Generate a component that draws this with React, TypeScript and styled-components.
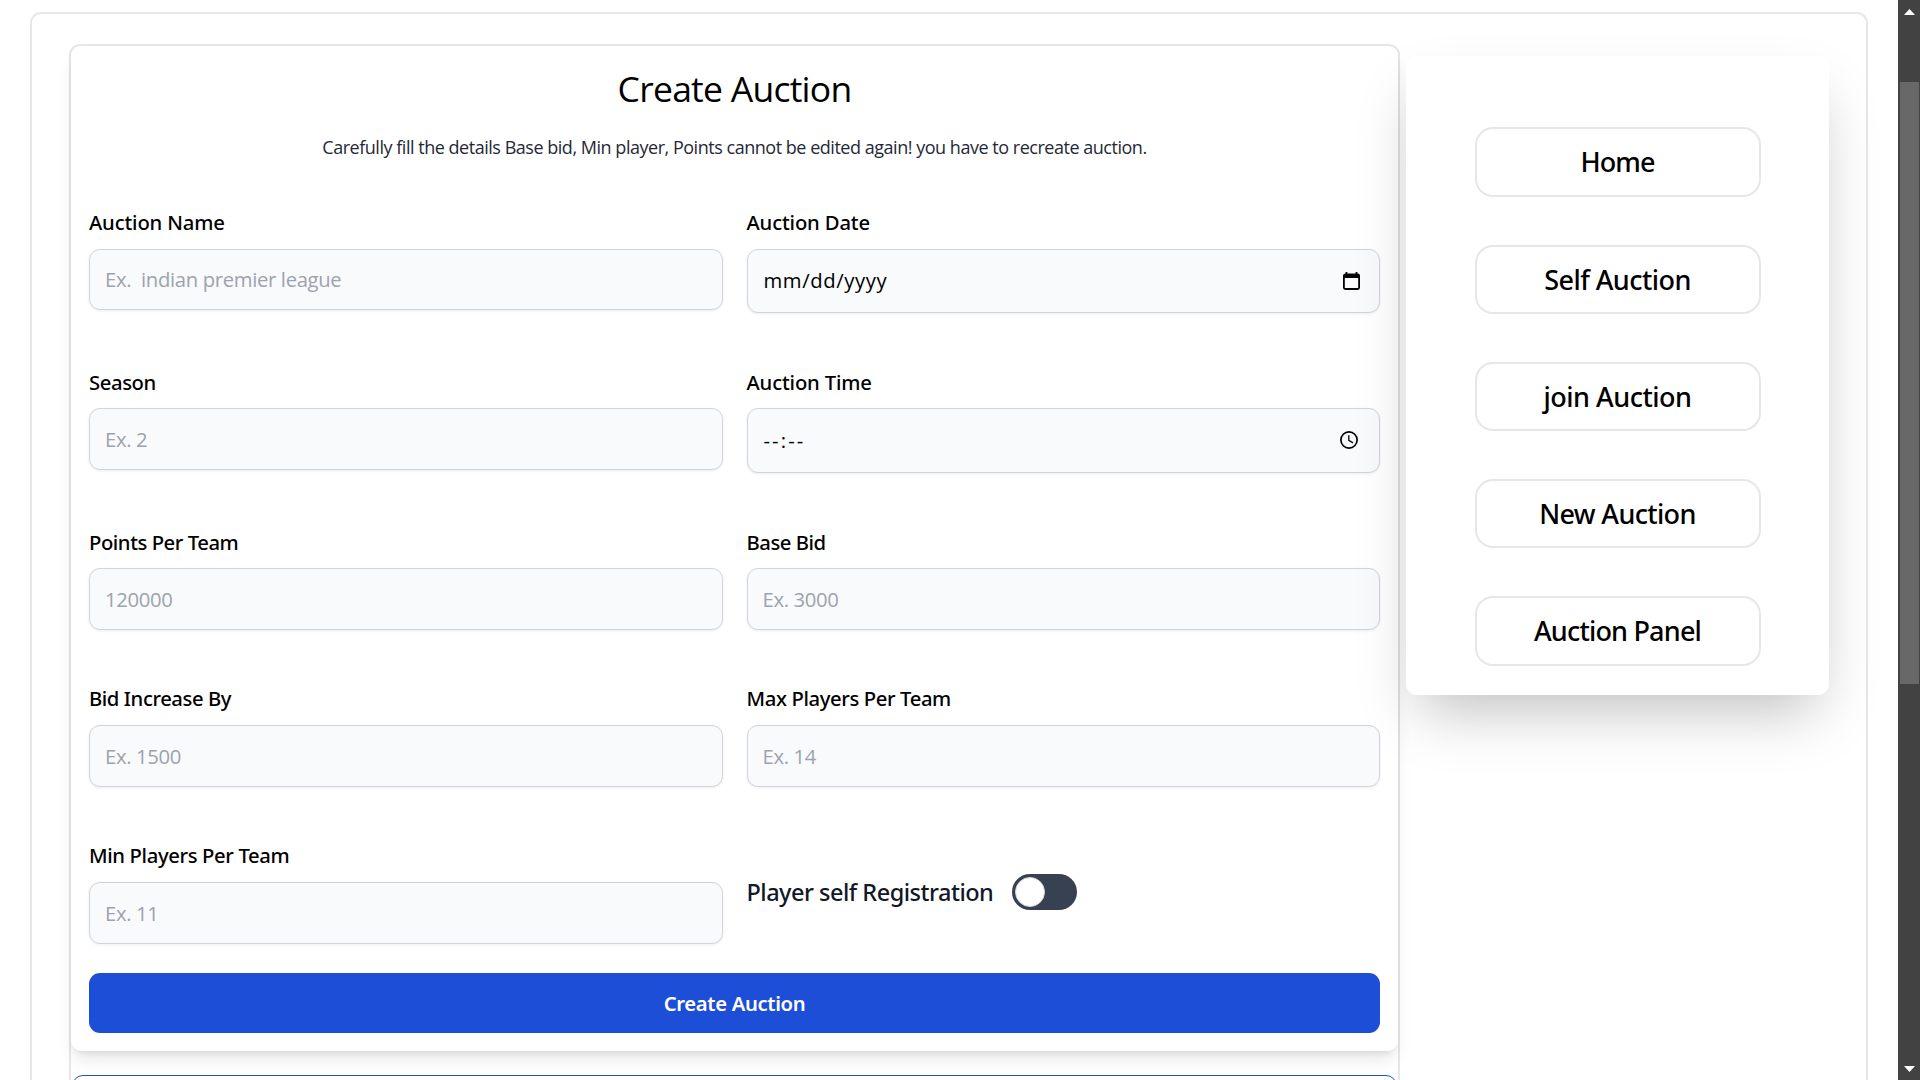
import React, { useState } from "react";
import styled, { createGlobalStyle } from "styled-components";

const textFont = '"Segoe UI", "Open Sans", "Noto Sans", sans-serif';
const mediumFont = '"Segoe UI", "Noto Sans", "Open Sans", sans-serif';

const GlobalStyle = createGlobalStyle`
  *, *::before, *::after { box-sizing: border-box; }
  body { margin: 0; background: #fff; color: #000; font-family: ${textFont}; overflow: hidden; }
  h1, p { margin: 0; font-weight: 400; }
  button, input { font: inherit; }
`;

const Screen = styled.div`
  display: flex;
  height: 1080px;
  overflow: hidden;
`;

const Page = styled.div`
  flex: 1;
  padding: 12px 30px 0;
  overflow: hidden;
`;

const Frame = styled.main`
  display: flex;
  align-items: flex-start;
  gap: 6px;
  height: 1400px;
  padding: 30px 37px;
  border: 2px solid #e5e7eb;
  border-radius: 11px;
`;

const Panel = styled.section`
  width: 1331px;
  height: 1300px;
  flex: none;
  border: 2px solid #e5e7eb;
  border-radius: 11px;
`;

const Form = styled.form`
  display: flex;
  flex-direction: column;
  height: 1005px;
  padding: 22px 18px 18px;
  border-radius: 11px;
  box-shadow: 0 11px 17px -3px rgba(0, 0, 0, 0.1), 0 4.5px 7px -4px rgba(0, 0, 0, 0.1);
`;

const Title = styled.h1`
  font-size: 35.5px;
  line-height: 40px;
  letter-spacing: -0.75px;
  text-align: center;
`;

const Notice = styled.p`
  margin-top: 25px;
  color: #1f2937;
  font-size: 18px;
  line-height: 29px;
  letter-spacing: -0.475px;
  text-align: center;
`;

const Fields = styled.div`
  display: grid;
  grid-template-columns: 1fr 1fr;
  grid-template-rows: 159px 160px 157px 157px 104px;
  column-gap: 24px;
  margin-top: 45px;
`;

const Field = styled.div`
  display: flex;
  flex-direction: column;
  gap: 12px;
`;

const Label = styled.label<{ $track: number; $drop: number }>`
  padding-top: ${(p) => p.$drop * 2}px;
  height: 30px;
  font-family: ${mediumFont};
  font-weight: 550;
  font-size: 20.25px;
  line-height: ${(p) => 30 - p.$drop * 2}px;
  letter-spacing: ${(p) => p.$track}px;
`;

const Input = styled.input<{ $height: number }>`
  width: 100%;
  height: ${(p) => p.$height}px;
  padding: 0 15px ${(p) => (p.$height === 61 ? 2 : 1)}px;
  border: 1px solid #d1d5db;
  border-radius: 11px;
  outline: none;
  background: #f9fafb;
  box-shadow: 0 1px 3px rgba(0, 0, 0, 0.07);
  font-size: 20.25px;
  letter-spacing: -0.33px;
  &::placeholder { color: #9ca3af; opacity: 1; }
`;

const Picker = styled.div<{ $height: number; $end: number }>`
  display: flex;
  align-items: center;
  justify-content: space-between;
  height: ${(p) => p.$height}px;
  padding: 0 ${(p) => p.$end}px 0 16px;
  border: 1px solid #d1d5db;
  border-radius: 11px;
  background: #f9fafb;
  box-shadow: 0 1px 3px rgba(0, 0, 0, 0.07);
  svg { display: block; margin-bottom: 1px; }
`;

const PickerText = styled.span<{ $track: number }>`
  padding-bottom: 2px;
  font-size: 20.25px;
  letter-spacing: ${(p) => p.$track}px;
`;

const ToggleRow = styled.div`
  display: flex;
  align-items: center;
  align-self: start;
  height: 36px;
  margin-top: 34px;
`;

const ToggleText = styled.span`
  width: 265px;
  color: #111827;
  font-family: ${mediumFont};
  font-weight: 500;
  font-size: 23.5px;
  letter-spacing: -0.5px;
  white-space: nowrap;
`;

const Toggle = styled.button<{ $on: boolean }>`
  display: flex;
  align-items: center;
  justify-content: ${(p) => (p.$on ? "flex-end" : "flex-start")};
  width: 65px;
  height: 36px;
  padding: 0 3px;
  border: 0;
  border-radius: 18px;
  background: ${(p) => (p.$on ? "#1d4ed8" : "#374151")};
  &::after {
    content: "";
    width: 30px;
    height: 30px;
    border: 1px solid #d1d5db;
    border-radius: 50%;
    background: #fff;
  }
`;

const Submit = styled.button`
  height: 60px;
  margin-top: 29px;
  padding: 0 0 1px;
  border: 0;
  border-radius: 11px;
  background: #1d4ed8;
  color: #fff;
  font-family: ${mediumFont};
  font-weight: 560;
  font-size: 20.25px;
  letter-spacing: -0.35px;
`;

const NextSection = styled.div`
  height: 120px;
  margin: 24px 1px 0;
  border: 1px solid #1d4ed8;
  border-radius: 11px;
`;

const Sidebar = styled.nav`
  display: flex;
  flex-direction: column;
  align-items: center;
  justify-content: space-between;
  width: 423px;
  height: 639px;
  margin-top: 12px;
  padding: 71.4px 0 29.4px;
  border-radius: 11px;
  background: #fff;
  position: relative;
  box-shadow: 0 28px 56px -13.5px rgba(0, 0, 0, 0.25);
`;

const NavButton = styled.button<{ $track: number }>`
  flex: none;
  width: 286px;
  height: 69.2px;
  padding: 0;
  border: 2px solid #e5e7eb;
  border-radius: 18px;
  background: #fff;
  color: #000;
  font-family: ${mediumFont};
  font-weight: 500;
  font-size: 27px;
  letter-spacing: ${(p) => p.$track}px;
`;

const ScrollTrack = styled.div`
  display: flex;
  flex-direction: column;
  align-items: center;
  width: 22px;
  height: 1080px;
  padding: 9px 0 8px;
  background: #424242;
`;

const ScrollThumb = styled.div`
  width: 19px;
  height: 602px;
  margin: 67px 0 auto;
  background: #686868;
`;

const CalendarIcon = () => (
  <svg width="17" height="18" viewBox="0 0 17 18" fill="none">
    <path d="M3.5 0v3M13.5 0v3" stroke="#000" strokeWidth="1.8" />
    <path d="M1 2h15v4H1z" fill="#000" />
    <rect x="0.9" y="2.4" width="15.2" height="14.6" rx="1.4" stroke="#000" strokeWidth="1.8" />
  </svg>
);

const ClockIcon = () => (
  <svg width="18" height="18" viewBox="0 0 18 18" fill="none" stroke="#000">
    <circle cx="9" cy="9" r="8.1" strokeWidth="1.7" />
    <path d="M8.8 4.2v5.2l4.2 2.5" strokeWidth="1.3" />
  </svg>
);

type FieldSpec = {
  label: string;
  track: number;
  hint: string;
  height: number;
  drop?: number;
  kind?: "date" | "time";
};

const fields: FieldSpec[] = [
  { label: "Auction Name", track: -0.15, hint: "Ex.  indian premier league", height: 61 },
  { label: "Auction Date", track: -0.15, hint: "mm/dd/yyyy", height: 64, kind: "date" },
  { label: "Season", track: -0.4, hint: "Ex. 2", height: 62, drop: 1 },
  { label: "Auction Time", track: -0.15, hint: "--:--", height: 65, drop: 1, kind: "time" },
  { label: "Points Per Team", track: -0.44, hint: "120000", height: 62, drop: 1 },
  { label: "Base Bid", track: -0.45, hint: "Ex. 3000", height: 62, drop: 1 },
  { label: "Bid Increase By", track: -0.42, hint: "Ex. 1500", height: 62 },
  { label: "Max Players Per Team", track: -0.38, hint: "Ex. 14", height: 62 },
  { label: "Min Players Per Team", track: -0.36, hint: "Ex. 11", height: 62 },
];

const links: { text: string; track: number }[] = [
  { text: "Home", track: -0.9 },
  { text: "Self Auction", track: -0.55 },
  { text: "join Auction", track: -0.5 },
  { text: "New Auction", track: -0.65 },
  { text: "Auction Panel", track: -0.8 },
];

function FieldControl({ field }: { field: FieldSpec }) {
  if (field.kind === "date") {
    return (
      <Picker $height={field.height} $end={19}>
        <PickerText $track={0.6}>{field.hint}</PickerText>
        <CalendarIcon />
      </Picker>
    );
  }
  if (field.kind === "time") {
    return (
      <Picker $height={field.height} $end={21}>
        <PickerText $track={2.1}>{field.hint}</PickerText>
        <ClockIcon />
      </Picker>
    );
  }
  return <Input $height={field.height} placeholder={field.hint} />;
}

export default function App() {
  const [selfRegistration, setSelfRegistration] = useState(false);
  return (
    <>
      <GlobalStyle />
      <Screen>
        <Page>
          <Frame>
            <Panel>
              <Form onSubmit={(e) => e.preventDefault()}>
                <Title>Create Auction</Title>
                <Notice>
                  Carefully fill the details Base bid, Min player, Points cannot be edited again! you have to recreate auction.
                </Notice>
                <Fields>
                  {fields.map((field) => (
                    <Field key={field.label}>
                      <Label $track={field.track} $drop={field.drop ?? 0}>{field.label}</Label>
                      <FieldControl field={field} />
                    </Field>
                  ))}
                  <ToggleRow>
                    <ToggleText>Player self Registration</ToggleText>
                    <Toggle
                      type="button"
                      $on={selfRegistration}
                      onClick={() => setSelfRegistration(!selfRegistration)}
                    />
                  </ToggleRow>
                </Fields>
                <Submit>Create Auction</Submit>
              </Form>
              <NextSection />
            </Panel>
            <Sidebar>
              {links.map((link) => (
                <NavButton key={link.text} $track={link.track}>
                  {link.text}
                </NavButton>
              ))}
            </Sidebar>
          </Frame>
        </Page>
        <ScrollTrack>
          <svg width="11" height="6" viewBox="0 0 11 6"><path d="M5.5 0L11 6H0z" fill="#fff" /></svg>
          <ScrollThumb />
          <svg width="11" height="6" viewBox="0 0 11 6"><path d="M5.5 6L11 0H0z" fill="#fff" /></svg>
        </ScrollTrack>
      </Screen>
    </>
  );
}
